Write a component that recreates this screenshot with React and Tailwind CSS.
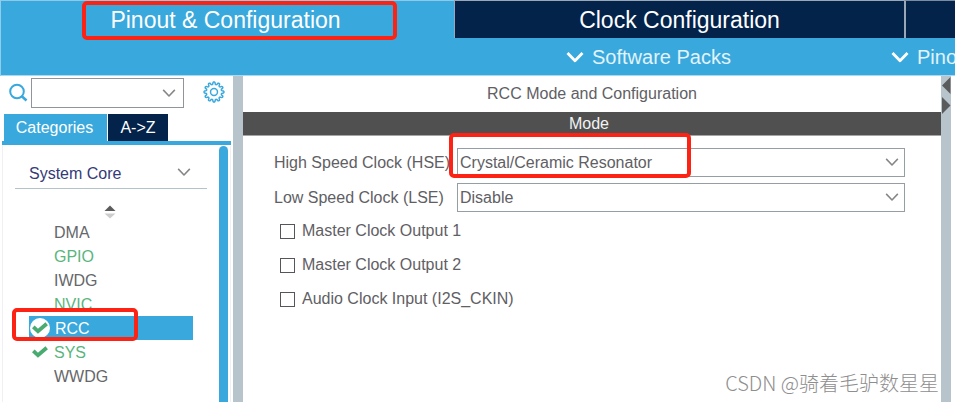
import React, { useState } from 'react';

const PERIPHERALS = [
  { name: 'DMA' },
  { name: 'GPIO', used: true },
  { name: 'IWDG' },
  { name: 'NVIC', used: true },
  { name: 'RCC', used: true, check: true },
  { name: 'SYS', used: true, check: true },
  { name: 'WWDG' },
];

const OUTPUTS = ['Master Clock Output 1', 'Master Clock Output 2', 'Audio Clock Input (I2S_CKIN)'];

function Chevron({ className, strokeWidth = 2 }) {
  return (
    <svg className={className} viewBox="0 0 18 12" fill="none" stroke="currentColor" strokeWidth={strokeWidth} aria-hidden="true">
      <path d="M1.5 2L9 9.8L16.5 2" strokeLinejoin="round" />
    </svg>
  );
}

function Check({ className }) {
  return (
    <svg className={className} viewBox="0 0 16 12" fill="none" stroke="#48ab70" strokeWidth="3.8" aria-hidden="true">
      <path d="M1.3 4.8L6 9.3L14.7 1.8" />
    </svg>
  );
}

// twelve round teeth around a ring
const GEAR = (() => {
  const steps = 120;
  let d = '';
  for (let i = 0; i < steps; i++) {
    const a = (i * 2 * Math.PI) / steps;
    const r = 9.6 + 1.3 * Math.tanh(2.2 * Math.cos(12 * a));
    d += `${i ? 'L' : 'M'}${(12 + r * Math.cos(a)).toFixed(2)} ${(12 + r * Math.sin(a)).toFixed(2)}`;
  }
  return d + 'Z';
})();

function Gear() {
  return (
    <svg className="size-[22px]" viewBox="0 0 24 24" fill="none" stroke="currentColor" strokeWidth="1.6" strokeLinejoin="round" aria-hidden="true">
      <path d={GEAR} />
      <circle cx="12" cy="12" r="3.8" />
    </svg>
  );
}

function Header() {
  return (
    <header className="bg-[#39a8dc] border-l border-[#8fcdeb] text-white">
      <nav className="grid grid-cols-[453fr_450fr_51fr] h-[38px] text-[23px] leading-8">
        <button className="border-t border-[#8fc9e6] pr-1">
          <span className="relative inline-block whitespace-nowrap">
            Pinout &amp; Configuration
            <span className="absolute -top-[3px] -left-7 -right-14 h-[39px] border-4 border-[#fd2314] rounded-[5px]" />
          </span>
        </button>
        <button className="bg-[#03234b] border-t border-l border-[#9aa7b7] whitespace-nowrap">Clock Configuration</button>
        <button className="bg-[#03234b] border-t border-t-[#7c8b9f] border-l-2 border-l-[#9aa7b7]" aria-label="Project Manager" />
      </nav>
      <div className="grid grid-cols-[565fr_325fr_64fr] h-[38px] border-b border-[#a9d9f0] text-[20px] text-[#e2f3fb] overflow-hidden">
        <span />
        <button className="flex items-center gap-2 whitespace-nowrap">
          <Chevron className="w-[18px] h-3 text-white" strokeWidth={2.8} />
          Software Packs
        </button>
        <button className="flex items-center gap-2 min-w-0 whitespace-nowrap">
          <Chevron className="w-[18px] h-3 shrink-0 text-white" strokeWidth={2.8} />
          Pino
        </button>
      </div>
    </header>
  );
}

function Sidebar() {
  return (
    <aside className="w-[233px] shrink-0 flex flex-col">
      <div className="flex items-center h-[34px] pl-2 text-[#39a8dc]">
        <svg className="size-5 mr-[3px]" viewBox="0 0 20 20" fill="none" stroke="currentColor" strokeWidth="2" aria-hidden="true">
          <circle cx="9" cy="8.5" r="6.8" />
          <path d="M13.5 13L18.5 17.5" strokeWidth="2.6" />
        </svg>
        <div className="relative">
          <input aria-label="Search" className="block w-[153px] h-[30px] border border-[#8f959b] bg-white px-2 pr-8 text-[#55565a] outline-none" />
          <Chevron className="absolute right-2 top-[10px] w-[14px] h-[10px] text-[#868686]" />
        </div>
        <button className="ml-[19px] mb-[2px]" aria-label="Settings"><Gear /></button>
      </div>
      <div className="flex gap-px mt-[4px] ml-1 text-white">
        <button className="bg-[#39a8dc] w-[103px] h-[27px] pr-[2px]">Categories</button>
        <button className="bg-[#03234b] w-[60px] h-[27px]">A-&gt;Z</button>
      </div>
      <div className="flex flex-col flex-1 mr-[2px] ml-[2px] border-t-4 border-[#39a8dc]">
        <div className="flex flex-1">
          <div className="flex-1 border-l border-[#eef0f4]">
            <button className="flex items-center justify-between w-48 h-[44px] ml-3 pl-[14px] pr-4 pt-[14px] border-b border-[#b4c2ca] text-[#343a78]">
              System Core
              <Chevron className="w-[14px] h-[10px] mb-1 text-[#868686]" />
            </button>
            <button className="block mx-auto mt-4 mb-px pr-[2px]" aria-label="Sort">
              <svg className="w-3 h-[14px]" viewBox="0 0 12 14" aria-hidden="true">
                <path d="M0.5 6L6 0.5L11.5 6Z" fill="#5c5c5c" />
                <path d="M0.5 8.5L11.5 8.5L6 13.5Z" fill="#cdcdcd" />
              </svg>
            </button>
            <ul>
              {PERIPHERALS.map((p) => {
                const selected = p.name === 'RCC';
                return (
                  <li key={p.name} className={`relative flex items-center h-6 w-[164px] ml-[26px] ${selected ? 'bg-[#39a8dc] text-white' : p.used ? 'text-[#5ab57d]' : 'text-[#66676a]'}`}>
                    <span className={`flex items-center justify-center size-5 mr-1 ml-px ${selected ? 'bg-white rounded-full' : ''}`}>
                      {p.check && <Check className="w-4 h-3" />}
                    </span>
                    <button className={selected ? 'pl-px pt-px' : 'pt-px'}>{p.name}</button>
                    {selected && <span className="absolute -left-[17px] -top-2 w-[126px] h-[33px] border-4 border-[#fd2314] rounded-[5px]" />}
                  </li>
                );
              })}
            </ul>
          </div>
          <div className="w-3 mt-px pr-[2px] border-r border-[#eef0f4]">
            <div className="h-full bg-[#39a8dc] rounded-t-full" />
          </div>
        </div>
      </div>
    </aside>
  );
}

function ClockSelect({ id, value, options, onChange }) {
  return (
    <div className="relative">
      <select id={id} value={value} onChange={(e) => onChange(e.target.value)} className="block appearance-none w-full h-[29px] pl-[2px] pr-8 border border-[#969ea5] bg-white outline-none">
        {options.map((o) => <option key={o}>{o}</option>)}
      </select>
      <Chevron className="absolute right-[6px] top-[9px] w-[14px] h-[10px] text-[#868686] pointer-events-none" />
    </div>
  );
}

function ModePanel() {
  const [hse, setHse] = useState('Crystal/Ceramic Resonator');
  const [lse, setLse] = useState('Disable');
  const options = ['Disable', 'BYPASS Clock Source', 'Crystal/Ceramic Resonator'];

  return (
    <main className="relative flex-1 min-w-0 text-[#5f6064]">
      <h1 className="h-9 leading-9 text-center">RCC Mode and Configuration</h1>
      <h2 className="h-6 leading-6 text-center bg-[#4f504f] text-[#f2f2f2] border-b border-[#a5a5a5] pr-[6px]">Mode</h2>
      <form className="pt-3 pl-[31px] pr-9">
        <div className="relative grid grid-cols-[183px_1fr] items-center gap-y-[6px] whitespace-nowrap">
          <label htmlFor="hse">High Speed Clock (HSE)</label>
          <ClockSelect id="hse" value={hse} options={options} onChange={setHse} />
          <label htmlFor="lse">Low Speed Clock (LSE)</label>
          <ClockSelect id="lse" value={lse} options={options} onChange={setLse} />
          <span className="absolute left-[175px] -top-[15px] w-[242px] h-[45px] border-4 border-[#fd2314] rounded-[5px] pointer-events-none" />
        </div>
        <div className="mt-[2px] pl-[6px]">
          {OUTPUTS.map((o) => (
            <label key={o} className="flex items-center gap-[7px] h-[34px]">
              <input type="checkbox" className="appearance-none size-[15px] border border-[#55565a] bg-white checked:bg-[#39a8dc]" />
              {o}
            </label>
          ))}
        </div>
      </form>
      <p className="absolute right-[2px] bottom-1 text-[20px] leading-[30px] text-[#8e8e8e] font-light whitespace-nowrap font-['Noto_Sans_CJK_SC',sans-serif]">CSDN @骑着毛驴数星星</p>
    </main>
  );
}

export default function App() {
  return (
    <div className="flex flex-col min-h-screen bg-white overflow-hidden text-[16px] leading-6 font-['Liberation_Sans',Arial,sans-serif]">
      <Header />
      <div className="flex flex-1">
        <Sidebar />
        <div className="w-[10px] shrink-0 bg-[#b8c4cc]" />
        <ModePanel />
        <div className="w-[10px] shrink-0 mr-1 bg-[#b8c4cc]">
          <svg className="w-[10px] h-10" viewBox="0 0 10 40" fill="#5a5b5d" aria-hidden="true">
            <path d="M9.5 1V18L1 9.5Z" />
            <path d="M1 21V38L9.5 29.5Z" />
          </svg>
        </div>
      </div>
    </div>
  );
}
